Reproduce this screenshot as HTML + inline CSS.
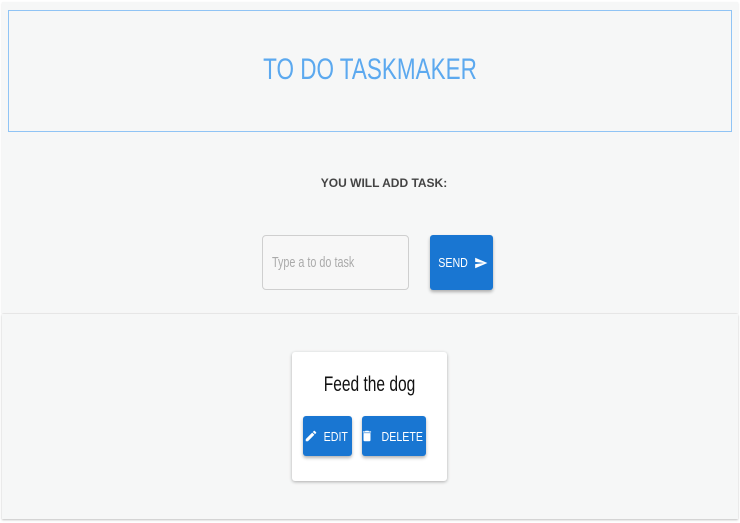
<!DOCTYPE html>
<html><head><meta charset="utf-8"><style>
*{margin:0;padding:0;box-sizing:border-box}
body{width:740px;height:523px;background:#fff;font-family:"Liberation Sans",sans-serif;position:relative;overflow:hidden}
.a{position:absolute}
.p1{left:2px;top:2px;width:736px;height:311px;background:#f6f7f7;box-shadow:0 1px 2px rgba(0,0,0,.12)}
.p2{left:2px;top:314px;width:736px;height:205px;background:#f6f7f7;box-shadow:0 1px 2px rgba(0,0,0,.25)}
.hdr{left:8px;top:10px;width:724px;height:122px;border:1px solid #90c4f5}
.t{color:#5ca9ef;font-size:30px;white-space:nowrap;transform:scaleX(.75);transform-origin:center;width:724px;left:8px;text-align:center;top:53px}
.lbl{left:14px;width:740px;text-align:center;top:176px;font-size:12px;font-weight:bold;color:#444}
.inp{left:262px;top:235px;width:147px;height:55px;border:1px solid #cfcfcf;border-radius:4px;background:#f7f7f7}
.inp span{position:absolute;left:9px;top:18px;font-size:15px;color:#aaa;transform:scaleX(.72);transform-origin:left;white-space:nowrap}
.btn{background:#1976d2;border-radius:3px;box-shadow:0 2px 3px rgba(0,0,0,.3);color:#fff;font-size:13px;display:flex;align-items:center;justify-content:center;white-space:nowrap}
.btn svg{flex-shrink:0}
.btn b{font-weight:500;display:inline-block;transform:scaleX(.82)}
.card{left:292px;top:352px;width:155px;height:129px;background:#fff;border-radius:3px;box-shadow:0 1px 3px rgba(0,0,0,.3)}
.ft{left:292px;width:155px;text-align:center;top:373px;font-size:21px;color:#111;transform:scaleX(.74);font-weight:500}
</style></head><body>
<div class="a p1"></div>
<div class="a p2"></div>
<div class="a hdr"></div>
<div class="a t">TO DO TASKMAKER</div>
<div class="a lbl">YOU WILL ADD TASK:</div>
<div class="a inp"><span>Type a to do task</span></div>
<div class="a btn" style="left:430px;top:235px;width:63px;height:55px"><b>SEND</b>
<svg width="14" height="14" viewBox="0 0 24 24" style="margin-left:3px"><path d="M2 21l21-9L2 3v7l15 2-15 2z" fill="#fff"/></svg></div>
<div class="a card"></div>
<div class="a ft">Feed the dog</div>
<div class="a btn" style="left:303px;top:416px;width:49px;height:40px">
<svg width="14" height="14" viewBox="0 0 24 24" style="margin-right:3px"><path d="M3 17.25V21h3.75L17.81 9.94l-3.75-3.75L3 17.25zM20.71 7.04a1 1 0 000-1.41l-2.34-2.34a1 1 0 00-1.41 0l-1.83 1.83 3.75 3.75 1.83-1.83z" fill="#fff"/></svg><b>EDIT</b></div>
<div class="a btn" style="left:362px;top:416px;width:64px;height:40px">
<svg width="14" height="14" viewBox="0 0 24 24" style="margin-right:3px"><path d="M6 19a2 2 0 002 2h8a2 2 0 002-2V7H6v12zM19 4h-3.5l-1-1h-5l-1 1H5v2h14V4z" fill="#fff"/></svg><b>DELETE</b></div>
</body></html>
